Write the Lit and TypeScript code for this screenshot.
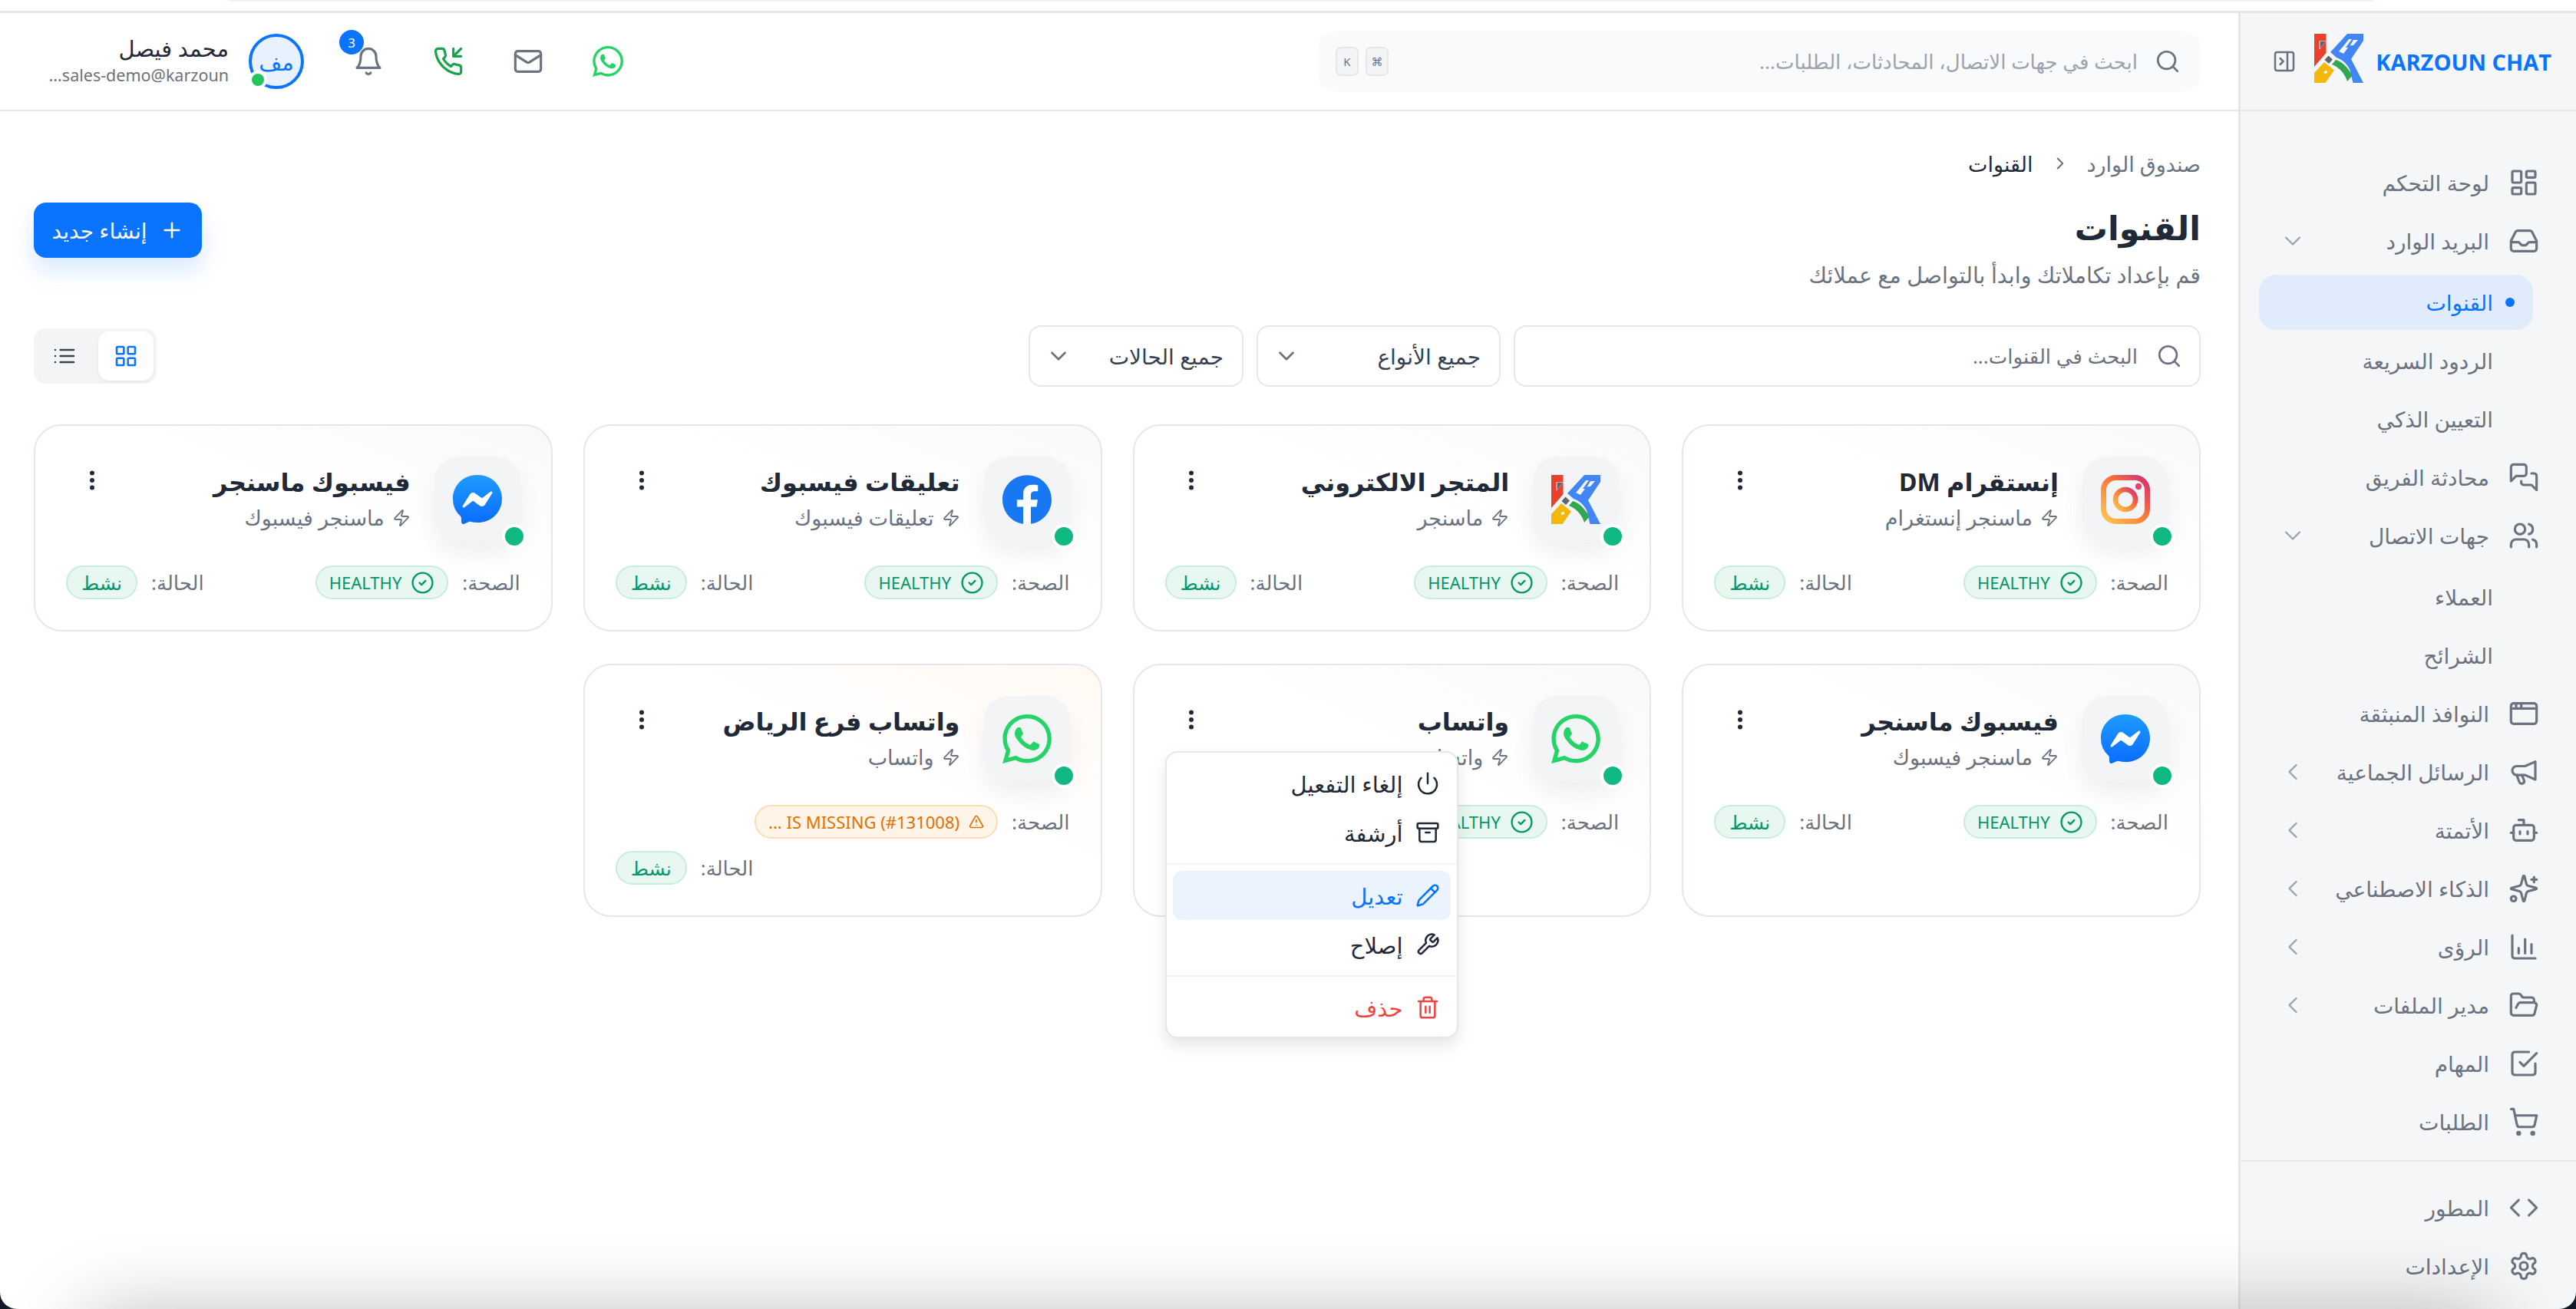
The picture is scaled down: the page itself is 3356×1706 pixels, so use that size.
import { LitElement, html, css, svg } from "lit";
import { customElement } from "lit/decorators.js";

const P: Record<string, any> = {
  panel: svg`<rect x="3" y="3" width="18" height="18" rx="2"/><path d="M15 3v18"/><path d="m8 9 3 3-3 3"/>`,
  dash: svg`<rect x="3" y="3" width="7" height="9" rx="1"/><rect x="14" y="3" width="7" height="5" rx="1"/><rect x="14" y="12" width="7" height="9" rx="1"/><rect x="3" y="16" width="7" height="5" rx="1"/>`,
  inbox: svg`<path d="M2 13h5.5c.8 0 1.2.5 1.6 1 .6 1 1.7 1.5 2.9 1.5s2.3-.5 2.9-1.5c.4-.5.8-1 1.6-1H22"/><path d="M5.45 5.11 2 12v6a2 2 0 0 0 2 2h16a2 2 0 0 0 2-2v-6l-3.45-6.89A2 2 0 0 0 16.76 4H7.24a2 2 0 0 0-1.79 1.11z"/>`,
  chat: svg`<path d="M14 9a2 2 0 0 1-2 2H6l-4 4V4a2 2 0 0 1 2-2h8a2 2 0 0 1 2 2z"/><path d="M18 9h2a2 2 0 0 1 2 2v11l-4-4h-6a2 2 0 0 1-2-2v-1"/>`,
  users: svg`<path d="M16 21v-2a4 4 0 0 0-4-4H6a4 4 0 0 0-4 4v2"/><circle cx="9" cy="7" r="4"/><path d="M22 21v-2a4 4 0 0 0-3-3.87"/><path d="M16 3.13a4 4 0 0 1 0 7.75"/>`,
  window: svg`<rect x="2" y="4" width="20" height="16" rx="2"/><path d="M10 4v4"/><path d="M2 8h20"/><path d="M6 4v4"/>`,
  mega: svg`<path d="M13 7.5 21 4v14l-8-3.5H6.5A3.5 3.5 0 0 1 3 11a3.5 3.5 0 0 1 3.5-3.5z"/><path d="m6.5 14.5 2 5.5a2 2 0 0 0 3.7-1.5l-1.7-4"/>`,
  bot: svg`<path d="M12 8V4H8"/><rect x="4" y="8" width="16" height="12" rx="2"/><path d="M2 14h2"/><path d="M20 14h2"/><path d="M15 13v2"/><path d="M9 13v2"/>`,
  spark: svg`<path d="M9.937 15.5A2 2 0 0 0 8.5 14.063l-6.135-1.582a.5.5 0 0 1 0-.962L8.5 9.936A2 2 0 0 0 9.937 8.5l1.582-6.135a.5.5 0 0 1 .963 0L14.063 8.5A2 2 0 0 0 15.5 9.937l6.135 1.581a.5.5 0 0 1 0 .964L15.5 14.063a2 2 0 0 0-1.437 1.437l-1.582 6.135a.5.5 0 0 1-.963 0z"/><path d="M20 3v4"/><path d="M22 5h-4"/><circle cx="4" cy="20" r="2"/>`,
  chart: svg`<path d="M3 3v16a2 2 0 0 0 2 2h16"/><path d="M18 17v-7"/><path d="M13 17V6"/><path d="M8 17v-4"/>`,
  folder: svg`<path d="m6 14 1.5-2.9A2 2 0 0 1 9.24 10H20a2 2 0 0 1 1.94 2.5l-1.54 6a2 2 0 0 1-1.95 1.5H4a2 2 0 0 1-2-2V5a2 2 0 0 1 2-2h3.9a2 2 0 0 1 1.69.9l.81 1.2a2 2 0 0 0 1.67.9H18a2 2 0 0 1 2 2v2"/>`,
  task: svg`<path d="m9 11 3 3L22 4"/><path d="M21 12v7a2 2 0 0 1-2 2H5a2 2 0 0 1-2-2V5a2 2 0 0 1 2-2h11"/>`,
  cart: svg`<circle cx="8" cy="21" r="1"/><circle cx="19" cy="21" r="1"/><path d="M2.05 2.05h2l2.66 12.42a2 2 0 0 0 2 1.58h9.78a2 2 0 0 0 1.95-1.57l1.65-7.43H5.12"/>`,
  code: svg`<path d="m16 18 6-6-6-6"/><path d="m8 6-6 6 6 6"/>`,
  gear: svg`<path d="M12.22 2h-.44a2 2 0 0 0-2 2v.18a2 2 0 0 1-1 1.73l-.43.25a2 2 0 0 1-2 0l-.15-.08a2 2 0 0 0-2.73.73l-.22.38a2 2 0 0 0 .73 2.73l.15.1a2 2 0 0 1 1 1.72v.51a2 2 0 0 1-1 1.74l-.15.09a2 2 0 0 0-.73 2.73l.22.38a2 2 0 0 0 2.73.73l.15-.08a2 2 0 0 1 2 0l.43.25a2 2 0 0 1 1 1.73V20a2 2 0 0 0 2 2h.44a2 2 0 0 0 2-2v-.18a2 2 0 0 1 1-1.73l.43-.25a2 2 0 0 1 2 0l.15.08a2 2 0 0 0 2.73-.73l.22-.39a2 2 0 0 0-.73-2.73l-.15-.08a2 2 0 0 1-1-1.74v-.5a2 2 0 0 1 1-1.74l.15-.09a2 2 0 0 0 .73-2.73l-.22-.38a2 2 0 0 0-2.73-.73l-.15.08a2 2 0 0 1-2 0l-.43-.25a2 2 0 0 1-1-1.73V4a2 2 0 0 0-2-2z"/><circle cx="12" cy="12" r="3"/>`,
  search: svg`<circle cx="11" cy="11" r="8"/><path d="m21 21-4.3-4.3"/>`,
  bell: svg`<path d="M6 8a6 6 0 0 1 12 0c0 7 3 9 3 9H3s3-2 3-9"/><path d="M10.3 21a1.94 1.94 0 0 0 3.4 0"/>`,
  phone: svg`<path d="M16 2v6h6"/><path d="m22 2-6 6"/><path d="M22 16.92v3a2 2 0 0 1-2.18 2 19.79 19.79 0 0 1-8.63-3.07 19.5 19.5 0 0 1-6-6 19.79 19.79 0 0 1-3.07-8.67A2 2 0 0 1 4.11 2h3a2 2 0 0 1 2 1.72 12.84 12.84 0 0 0 .7 2.81 2 2 0 0 1-.45 2.11L8.09 9.91a16 16 0 0 0 6 6l1.27-1.27a2 2 0 0 1 2.11-.45 12.84 12.84 0 0 0 2.81.7A2 2 0 0 1 22 16.92z"/>`,
  mail: svg`<rect x="2" y="4" width="20" height="16" rx="2"/><path d="m22 7-8.97 5.7a1.94 1.94 0 0 1-2.06 0L2 7"/>`,
  down: svg`<path d="m6 9 6 6 6-6"/>`,
  left: svg`<path d="m15 18-6-6 6-6"/>`,
  right: svg`<path d="m9 18 6-6-6-6"/>`,
  plus: svg`<path d="M5 12h14"/><path d="M12 5v14"/>`,
  grid: svg`<rect x="3" y="3" width="7" height="7" rx="1"/><rect x="14" y="3" width="7" height="7" rx="1"/><rect x="14" y="14" width="7" height="7" rx="1"/><rect x="3" y="14" width="7" height="7" rx="1"/>`,
  list: svg`<path d="M3 6h.01"/><path d="M3 12h.01"/><path d="M3 18h.01"/><path d="M8 6h13"/><path d="M8 12h13"/><path d="M8 18h13"/>`,
  bolt: svg`<path d="M4 14a1 1 0 0 1-.78-1.63l9.9-10.2a.5.5 0 0 1 .86.46l-1.92 6.02A1 1 0 0 0 13 10h7a1 1 0 0 1 .78 1.63l-9.9 10.2a.5.5 0 0 1-.86-.46l1.92-6.02A1 1 0 0 0 11 14z"/>`,
  check: svg`<circle cx="12" cy="12" r="10"/><path d="m9 12 2 2 4-4"/>`,
  warn: svg`<path d="m21.73 18-8-14a2 2 0 0 0-3.48 0l-8 14A2 2 0 0 0 4 21h16a2 2 0 0 0 1.73-3"/><path d="M12 9v4"/><path d="M12 17h.01"/>`,
  power: svg`<path d="M12 2v10"/><path d="M18.4 6.6a9 9 0 1 1-12.77.04"/>`,
  archive: svg`<rect x="2" y="3" width="20" height="5" rx="1"/><path d="M4 8v11a2 2 0 0 0 2 2h12a2 2 0 0 0 2-2V8"/><path d="M10 12h4"/>`,
  pencil: svg`<path d="M21.17 6.81a1 1 0 0 0-3.99-3.99L3.84 16.17a2 2 0 0 0-.5.83l-1.32 4.35a.5.5 0 0 0 .62.62l4.35-1.32a2 2 0 0 0 .83-.5z"/><path d="m15 5 4 4"/>`,
  wrench: svg`<path d="M14.7 6.3a1 1 0 0 0 0 1.4l1.6 1.6a1 1 0 0 0 1.4 0l3.77-3.77a6 6 0 0 1-7.94 7.94l-6.91 6.91a2.12 2.12 0 0 1-3-3l6.91-6.91a6 6 0 0 1 7.94-7.94l-3.76 3.76z"/>`,
  trash: svg`<path d="M3 6h18"/><path d="M19 6v14a2 2 0 0 1-2 2H7a2 2 0 0 1-2-2V6"/><path d="M8 6V4a2 2 0 0 1 2-2h4a2 2 0 0 1 2 2v2"/><path d="M10 11v6"/><path d="M14 11v6"/>`,
};

const ic = (n: string, s = 40, w = 1.9) =>
  html`<svg class="ic" width=${s} height=${s} viewBox="0 0 24 24" fill="none" stroke="currentColor" stroke-width=${w} stroke-linecap="round" stroke-linejoin="round">${P[n]}</svg>`;

const WA_D = "M17.472 14.382c-.297-.149-1.758-.867-2.03-.967-.273-.099-.471-.148-.67.15-.197.297-.767.966-.94 1.164-.173.199-.347.223-.644.075-.297-.15-1.255-.463-2.39-1.475-.883-.788-1.48-1.761-1.653-2.059-.173-.297-.018-.458.13-.606.134-.133.298-.347.446-.52.149-.174.198-.298.298-.497.099-.198.05-.371-.025-.52-.075-.149-.669-1.612-.916-2.207-.242-.579-.487-.5-.669-.51-.173-.008-.371-.01-.57-.01-.198 0-.52.074-.792.372-.272.297-1.04 1.016-1.04 2.479 0 1.462 1.065 2.875 1.213 3.074.149.198 2.096 3.2 5.077 4.487.709.306 1.262.489 1.694.625.712.227 1.36.195 1.871.118.571-.085 1.758-.719 2.006-1.413.248-.694.248-1.289.173-1.413-.074-.124-.272-.198-.57-.347m-5.421 7.403h-.004a9.87 9.87 0 01-5.031-1.378l-.361-.214-3.741.982.998-3.648-.235-.374a9.86 9.86 0 01-1.51-5.26c.001-5.45 4.436-9.884 9.888-9.884 2.64 0 5.122 1.03 6.988 2.898a9.825 9.825 0 012.893 6.994c-.003 5.45-4.437 9.884-9.885 9.884m8.413-18.297A11.815 11.815 0 0012.05 0C5.495 0 .16 5.335.157 11.892c0 2.096.547 4.142 1.588 5.945L.057 24l6.305-1.654a11.882 11.882 0 005.683 1.448h.005c6.554 0 11.89-5.335 11.893-11.893a11.821 11.821 0 00-3.48-8.413z";

const whatsapp = (s: number) => html`<svg width=${s} height=${s} viewBox="0 0 24 24"><path fill="#25d366" d=${WA_D}/></svg>`;

const messenger = (s: number) => html`<svg width=${s} height=${s} viewBox="0 0 24 24">
  <defs><linearGradient id="msg" x1="0.5" y1="1" x2="0.5" y2="0"><stop offset="0" stop-color="#0a6cff"/><stop offset="1" stop-color="#1e9bff"/></linearGradient></defs>
  <ellipse cx="12" cy="11.5" rx="9" ry="7" fill="#fff"/>
  <path fill="url(#msg)" fill-rule="evenodd" d="M.001 11.639C.001 4.949 5.241 0 12.001 0S24 4.95 24 11.639c0 6.689-5.24 11.638-11.999 11.638-1.21 0-2.38-.16-3.47-.46a.96.96 0 00-.64.05l-2.39 1.05a.96.96 0 01-1.35-.85l-.07-2.14a.97.97 0 00-.32-.68A11.39 11.389 0 01.002 11.64zm8.32-2.19l-3.52 5.6c-.35.53.32 1.139.82.75l3.79-2.87c.26-.2.6-.2.87 0l2.8 2.1c.84.63 2.04.4 2.6-.48l3.52-5.6c.35-.53-.32-1.13-.82-.75l-3.79 2.87c-.25.2-.6.2-.86 0l-2.8-2.1a1.8 1.8 0 00-2.61.48z"/></svg>`;

const facebook = (s: number) => html`<svg width=${s} height=${s} viewBox="0 0 24 24">
  <circle cx="12" cy="12" r="11" fill="#fff"/>
  <path fill="#1877f2" d="M24 12.073c0-6.627-5.373-12-12-12s-12 5.373-12 12c0 5.99 4.388 10.954 10.125 11.854v-8.385H7.078v-3.47h3.047V9.43c0-3.007 1.792-4.669 4.533-4.669 1.312 0 2.686.235 2.686.235v2.953H15.83c-1.491 0-1.956.925-1.956 1.874v2.25h3.328l-.532 3.47h-2.796v8.385C19.612 23.027 24 18.062 24 12.073z"/></svg>`;

const instagram = (s: number) => html`<svg width=${s} height=${s} viewBox="0 0 64 64" fill="none">
  <defs><linearGradient id="ig" x1="0.05" y1="0.95" x2="0.95" y2="0.05"><stop offset="0" stop-color="#fdc04e"/><stop offset="0.55" stop-color="#f9773a"/><stop offset="1" stop-color="#d8356e"/></linearGradient></defs>
  <rect x="3.5" y="3.5" width="57" height="57" rx="16" stroke="url(#ig)" stroke-width="7"/>
  <circle cx="32" cy="32" r="13" stroke="url(#ig)" stroke-width="6.5"/>
  <circle cx="49" cy="15" r="4.2" fill="#e0476a"/></svg>`;

const logo = (s: number) => html`<svg width=${s} height=${s} viewBox="0 0 64 64">
  <path fill="#e8412c" fill-rule="evenodd" d="M0 0H15.5V25L0 43zM6.5 9.5V21L15.5 9.5z"/>
  <path fill="#5f6672" d="M7.5 10H15L7.5 19.5z"/>
  <path fill="#f4b70b" fill-rule="evenodd" d="M0 51 13 37 26 47.5 14.5 64H0zM12 50l3.5-2.5 2 2.5-3 2.5z"/>
  <path fill="#5f6672" d="M18.5 28.5 24 33.5 19 39 13.5 34z"/>
  <path fill="#2fa84f" d="M23 40 28 34C35 36 42 41 49.5 54.5L43 62C40 52 33 44 23 40z"/>
  <path fill="#4285f4" fill-rule="evenodd" d="M21 24 43 0H64V9L48 33 64 64H50.5L46 46C42 38 35 33 29 31zM38 16 32 23 38 26 44 18H41L49 7H45zM51 8 46.5 15.5 51 15 57 8z"/></svg>`;

type Card = { name: string; sub: string; icon: any; warn?: boolean; menu?: boolean };
const cards: Card[] = [
  { name: "إنستقرام DM", sub: "ماسنجر إنستغرام", icon: instagram(64) },
  { name: "المتجر الالكتروني", sub: "ماسنجر", icon: logo(64) },
  { name: "تعليقات فيسبوك", sub: "تعليقات فيسبوك", icon: facebook(64) },
  { name: "فيسبوك ماسنجر", sub: "ماسنجر فيسبوك", icon: messenger(64) },
  { name: "فيسبوك ماسنجر", sub: "ماسنجر فيسبوك", icon: messenger(64) },
  { name: "واتساب", sub: "واتساب", icon: whatsapp(64), menu: true },
  { name: "واتساب فرع الرياض", sub: "واتساب", icon: whatsapp(64), warn: true },
];

type Nav = { t: string; i?: string; c?: "d" | "l"; active?: boolean };
const nav: Nav[] = [
  { t: "لوحة التحكم", i: "dash" },
  { t: "البريد الوارد", i: "inbox", c: "d" },
  { t: "القنوات", active: true },
  { t: "الردود السريعة" },
  { t: "التعيين الذكي" },
  { t: "محادثة الفريق", i: "chat" },
  { t: "جهات الاتصال", i: "users", c: "d" },
  { t: "العملاء" },
  { t: "الشرائح" },
  { t: "النوافذ المنبثقة", i: "window" },
  { t: "الرسائل الجماعية", i: "mega", c: "l" },
  { t: "الأتمتة", i: "bot", c: "l" },
  { t: "الذكاء الاصطناعي", i: "spark", c: "l" },
  { t: "الرؤى", i: "chart", c: "l" },
  { t: "مدير الملفات", i: "folder", c: "l" },
  { t: "المهام", i: "task" },
  { t: "الطلبات", i: "cart" },
];

@customElement("app-root")
export class AppRoot extends LitElement {
  static styles = css`
    :host { display: block; position: relative; width: 100%; height: 100vh; overflow: hidden; background: #fff; direction: rtl;
      font-family: "Noto Sans", "DejaVu Sans", sans-serif; font-size: 28px; color: #1f2937; }
    * { box-sizing: border-box; }
    .ic { display: block; flex: none; }
    .strip { height: 17px; border-bottom: 3px solid #e5e5e5; position: relative; }
    .strip i { position: absolute; top: 0; left: 298px; right: 263px; height: 2px; background: #eef2fb; border-radius: 0 0 8px 8px; }
    .shell { display: flex; height: calc(100vh - 17px); }
    aside { width: 440px; flex: none; background: #f5f6f8; border-left: 3px solid #e5e7eb; display: flex; flex-direction: column; }
    .brand { height: 128px; border-bottom: 2px solid #e5e7eb; display: flex; align-items: center; padding: 0 32px 0 41px; flex: none; }
    .brand-name { color: #0a74ff; font-weight: 700; font-size: 29px; white-space: nowrap; direction: ltr; font-family: "Open Sans", sans-serif; }
    .brand-logo { margin: 0 16px 0 0; flex: none; }
    .collapse { color: #6b7280; margin-right: auto; }
    .nav { flex: 1; padding: 57px 32px 0; display: flex; flex-direction: column; gap: 4px; }
    .item { height: 72px; display: flex; align-items: center; padding: 0 16px 0 18px; gap: 25px; color: #6b7280; white-space: nowrap; flex: none; }
    .item .chev { margin-right: auto; color: #9ca3af; }
    .sub { margin: 0 24px 0 -8px; padding: 0 24px; gap: 16px; }
    .sub .dot { width: 12px; height: 12px; border-radius: 50%; flex: none; }
    .sub.active { background: #e0ebfb; border-radius: 22px; color: #0a74ff; }
    .sub.active .dot { background: #0a74ff; }
    .mt4 { margin-top: 4px; }
    .foot { border-top: 2px solid #e5e7eb; padding: 24px 32px 20px; display: flex; flex-direction: column; gap: 4px; flex: none; }
    main { flex: 1; min-width: 0; display: flex; flex-direction: column; }
    header { height: 128px; border-bottom: 2px solid #e5e7eb; display: flex; align-items: center; justify-content: space-between; padding: 0 49px 0 58px; flex: none; }
    .gsearch { width: 1150px; height: 80px; border-radius: 24px; background: #f9fafb; display: flex; align-items: center; padding: 0 26px 0 23px; gap: 22px; color: #9ca3af; font-size: 26px; }
    .gsearch .ic { color: #6b7280; }
    .kbds { margin-right: auto; display: flex; gap: 9px; }
    .kbd { width: 30px; height: 38px; border: 2px solid #e5e7eb; border-radius: 7px; background: #f3f4f6; color: #6b7280; font-size: 15px; display: flex; align-items: center; justify-content: center; }
    .acts { display: flex; align-items: center; gap: 64px; }
    .act { width: 40px; height: 40px; position: relative; color: #6b7280; display: flex; align-items: center; justify-content: center; }
    .act.green { color: #16a34a; }
    .badge { position: absolute; top: -21px; right: 26px; width: 32px; height: 32px; border-radius: 50%; background: #0a74ff; color: #fff; font-size: 17px; display: flex; align-items: center; justify-content: center; }
    .user { display: flex; align-items: center; gap: 26px; }
    .avatar { width: 72px; height: 72px; border-radius: 50%; border: 4px solid #0a74ff; background: #e8f1fe; color: #0a74ff; font-size: 29px; display: flex; align-items: center; justify-content: center; position: relative; }
    .avatar i { position: absolute; left: -4px; bottom: -4px; width: 24px; height: 24px; border-radius: 50%; background: #22c55e; border: 4px solid #fff; }
    .uname { width: 240px; font-size: 29px; line-height: 36px; color: #1f2937; white-space: nowrap; }
    .umail { font-size: 21.5px; line-height: 34px; color: #6b7280; direction: rtl; }
    .page { flex: 1; padding: 48px 49px 0 44px; }
    .crumb { height: 40px; display: flex; align-items: center; gap: 22px; font-size: 27px; color: #6b7280; }
    .crumb b { font-weight: 400; color: #1f2937; }
    .title-row { margin-top: 28px; display: flex; justify-content: space-between; align-items: flex-start; }
    h1 { margin: 0; font-size: 43px; line-height: 72px; font-weight: 700; color: #1f2937; }
    .subtitle { margin: 5px 0 0; font-size: 28.5px; line-height: 40px; color: #6b7280; }
    .btn { margin-top: 3px; width: 219px; height: 72px; border-radius: 16px; background: #0a74ff; color: #fff; border: 0; display: flex; align-items: center; justify-content: center; gap: 16px; font: inherit; font-size: 28px; box-shadow: 0 16px 30px rgba(10,116,255,.16); white-space: nowrap; }
    .filters { margin-top: 46px; display: flex; align-items: center; gap: 17px; }
    .box { height: 80px; border: 2px solid #e5e7eb; border-radius: 16px; background: #fff; display: flex; align-items: center; flex: none; white-space: nowrap; }
    .fsearch { width: 895px; padding: 0 22px; gap: 24px; color: #6b7280; font-size: 26px; }
    .sel { padding: 0 24px 0 20px; font-size: 28px; color: #374151; justify-content: space-between; }
    .sel.t { width: 318px; }
    .sel.s { width: 280px; }
    .sel .ic { color: #6b7280; }
    .view { margin-right: auto; width: 160px; height: 72px; border-radius: 16px; background: #f3f4f6; display: flex; align-items: center; padding: 4px; color: #374151; }
    .view div { width: 72px; height: 64px; display: flex; align-items: center; justify-content: center; flex: none; }
    .view .on { background: #fff; border-radius: 14px; color: #0a74ff; box-shadow: 0 2px 4px rgba(0,0,0,.06); }
    .view .off { width: 80px; padding-right: 8px; }
    .grid { margin-top: 49px; display: grid; grid-template-columns: repeat(4, 1fr); gap: 42px 40px; }
    .card { position: relative; border: 2px solid #e5e7eb; border-radius: 36px; padding: 40px; background: linear-gradient(to bottom left, rgba(243,244,246,.55), #fff 42%); min-height: 270px; }
    .card.warn { background: linear-gradient(to bottom left, rgba(255,243,230,.5), #fff 42%); }
    .top { display: flex; align-items: flex-start; gap: 31px; }
    .icobox { position: relative; width: 112px; height: 112px; border-radius: 32px; background: #f3f4f6; box-shadow: 0 16px 30px rgba(0,0,0,.06); display: flex; align-items: center; justify-content: center; flex: none; }
    .live { position: absolute; right: -8px; bottom: -8px; width: 32px; height: 32px; border-radius: 50%; background: #10b981; border: 4px solid #fff; }
    .meta { flex: 1; min-width: 0; padding-top: 9px; }
    .cname { font-size: 32px; line-height: 48px; font-weight: 700; color: #1f2937; white-space: nowrap; }
    .csub { margin-top: 5px; display: flex; align-items: center; gap: 10px; font-size: 27px; line-height: 36px; color: #6b7280; white-space: nowrap; }
    .kebab { margin-top: 18px; margin-left: 30px; color: #1f2937; flex: none; }
    .stats { margin-top: 30px; display: flex; flex-wrap: wrap; justify-content: space-between; gap: 16px 20px; }
    .stat { display: flex; align-items: center; gap: 18px; font-size: 26px; color: #6b7280; white-space: nowrap; }
    .stat.last { margin-right: auto; }
    .pill { height: 44px; border-radius: 22px; border: 2px solid #c7eddc; background: #e9f7f1; color: #059669; font-size: 22px; padding: 0 16px; display: flex; align-items: center; gap: 12px; white-space: nowrap; }
    .pill.st { font-size: 25px; padding: 0 18px; }
    .pill.o { background: #fff4e8; border-color: #fddcb5; color: #e07000; padding: 0 16px; }
    .menu { position: absolute; left: 40px; top: 112px; width: 382px; height: 374px; background: #fff; border: 2px solid #e5e7eb; border-radius: 16px; padding: 8px; box-shadow: 0 10px 20px rgba(0,0,0,.1); z-index: 5; font-size: 29px; color: #1f2937; }
    .mi { height: 64px; display: flex; align-items: center; gap: 16px; padding: 0 14px; border-radius: 12px; white-space: nowrap; }
    .mi.hl { background: #ebf3ff; color: #0a74ff; }
    .mi.red { color: #ef4444; }
    .sep { height: 2px; background: #f3f4f6; margin: 8px -8px; }
    .veil { position: absolute; left: 115px; right: 115px; top: 1722px; height: 120px; box-shadow: 0 0 110px rgba(0,0,0,.32); pointer-events: none; z-index: 20; }
    .frame { position: absolute; inset: 0; border-radius: 0 0 22px 22px; box-shadow: 0 0 0 30px #111827; pointer-events: none; z-index: 21; }
  `;

  private renderNavItem(n: Nav) {
    if (!n.i) {
      return html`<div class="item sub ${n.active ? "active" : ""} ${n.active || n.t === "العملاء" ? "mt4" : ""}"><span class="dot"></span><span>${n.t}</span></div>`;
    }
    return html`<div class="item">${ic(n.i)}<span>${n.t}</span>${n.c ? html`<span class="chev">${ic(n.c === "d" ? "down" : "left", 36, 1.6)}</span>` : ""}</div>`;
  }

  private renderCard(c: Card) {
    return html`<div class="card ${c.warn ? "warn" : ""}">
      <div class="top">
        <div class="icobox">${c.icon}<span class="live"></span></div>
        <div class="meta">
          <div class="cname">${c.name}</div>
          <div class="csub">${ic("bolt", 24, 1.8)}<span>${c.sub}</span></div>
        </div>
        <svg class="kebab" width="8" height="26" viewBox="0 0 8 26" fill="currentColor"><circle cx="4" cy="3.5" r="3"/><circle cx="4" cy="13" r="3"/><circle cx="4" cy="22.5" r="3"/></svg>
      </div>
      <div class="stats">
        <div class="stat"><span>الصحة:</span>
          ${c.warn
            ? html`<span class="pill o">${ic("warn", 20)}<span dir="ltr">... IS MISSING (#131008)</span></span>`
            : html`<span class="pill">${ic("check", 31, 1.8)}<span>HEALTHY</span></span>`}
        </div>
        <div class="stat last"><span>الحالة:</span><span class="pill st">نشط</span></div>
      </div>
      ${c.menu
        ? html`<div class="menu">
            <div class="mi">${ic("power", 32)}<span>إلغاء التفعيل</span></div>
            <div class="mi">${ic("archive", 32)}<span>أرشفة</span></div>
            <div class="sep"></div>
            <div class="mi hl">${ic("pencil", 32)}<span>تعديل</span></div>
            <div class="mi">${ic("wrench", 32)}<span>إصلاح</span></div>
            <div class="sep"></div>
            <div class="mi red">${ic("trash", 32)}<span>حذف</span></div>
          </div>`
        : ""}
    </div>`;
  }

  render() {
    return html`
      <div class="strip"><i></i></div>
      <div class="shell">
        <aside>
          <div class="brand">
            <span class="brand-name">KARZOUN CHAT</span>
            <span class="brand-logo">${logo(64)}</span>
            <span class="collapse">${ic("panel", 32)}</span>
          </div>
          <div class="nav">${nav.map((n) => this.renderNavItem(n))}</div>
          <div class="foot">
            <div class="item">${ic("code")}<span>المطور</span></div>
            <div class="item">${ic("gear")}<span>الإعدادات</span></div>
          </div>
        </aside>
        <main>
          <header>
            <div class="gsearch">${ic("search", 34)}<span>ابحث في جهات الاتصال، المحادثات، الطلبات...</span>
              <div class="kbds"><span class="kbd">⌘</span><span class="kbd">K</span></div>
            </div>
            <div class="acts">
              <div class="act">${whatsapp(40)}</div>
              <div class="act">${ic("mail")}</div>
              <div class="act green">${ic("phone")}</div>
              <div class="act">${ic("bell")}<span class="badge">3</span></div>
              <div class="user">
                <div class="avatar">مف<i></i></div>
                <div class="uname">محمد فيصل<div class="umail"><bdi dir="ltr">...sales-demo@karzoun</bdi></div></div>
              </div>
            </div>
          </header>
          <div class="page">
            <div class="crumb"><span>صندوق الوارد</span>${ic("right", 26)}<b>القنوات</b></div>
            <div class="title-row">
              <div><h1>القنوات</h1><p class="subtitle">قم بإعداد تكاملاتك وابدأ بالتواصل مع عملائك</p></div>
              <button class="btn">${ic("plus", 32)}<span>إنشاء جديد</span></button>
            </div>
            <div class="filters">
              <div class="box fsearch">${ic("search", 34)}<span>البحث في القنوات...</span></div>
              <div class="box sel t"><span>جميع الأنواع</span>${ic("down", 34)}</div>
              <div class="box sel s"><span>جميع الحالات</span>${ic("down", 34)}</div>
              <div class="view"><div class="on">${ic("grid", 32)}</div><div class="off">${ic("list", 32)}</div></div>
            </div>
            <div class="grid">${cards.map((c) => this.renderCard(c))}</div>
          </div>
        </main>
      </div>
      <div class="veil"></div>
      <div class="frame"></div>
    `;
  }
}
